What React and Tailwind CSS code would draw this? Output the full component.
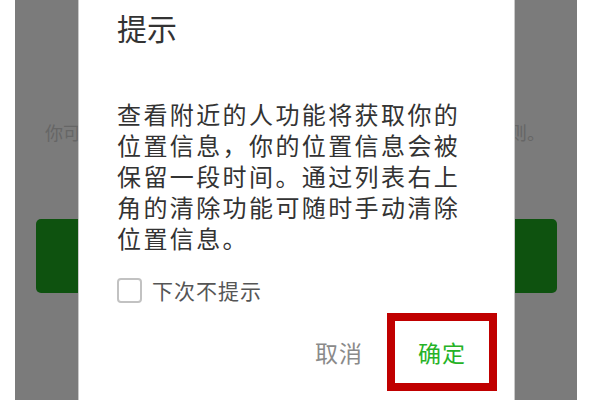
const cjk = { fontFamily: '"Noto Sans CJK SC", "Noto Sans", sans-serif' };

const App = () => {
    return (
        <div className="w-[600px] h-[400px] bg-white flex pl-[15px] pr-[23px] overflow-hidden" style={cjk}>
            {/* Dimmed page behind the dialog */}
            <div className="relative flex-1 bg-[#7b7b7b] flex flex-col">
                <div className="mt-[120px] pl-[30px] pr-[32px] flex justify-between text-[18px] leading-[24px] text-[#666666]">
                    <span>你可</span>
                    <span>则。</span>
                </div>
                <div className="mt-[75px] ml-[21px] mr-[20px] h-[74px] bg-[#0e520f] rounded-[5px]"></div>

                {/* Dialog */}
                <div className="absolute top-0 left-[63px] w-[437px] h-full bg-white border-x border-[#c9c9c9] flex flex-col pl-[38px] pr-[17px]">
                    <h2 className="pt-[12px] text-[30px] leading-[30px] text-[#333333]">提示</h2>
                    <p className="mt-[56px] text-[24px] leading-[31px] tracking-[2.4px] text-[#333333] pr-[18px]">
                        查看附近的人功能将获取你的位置信息，你的位置信息会被保留一段时间。通过列表右上角的清除功能可随时手动清除位置信息。
                    </p>
                    <label className="mt-[24px] flex items-center gap-[10px] cursor-pointer">
                        <span className="w-[25px] h-[25px] rounded-[4px] border-2 border-[#c2c2c2] bg-white"></span>
                        <span className="text-[21px] leading-[26px] tracking-[1px] text-[#555555]">下次不提示</span>
                    </label>
                    <div className="mt-[10px] flex justify-end items-center gap-[24px]">
                        <button className="text-[23px] leading-[30px] tracking-[1px] text-[#8a8a8a]">取消</button>
                        <button className="w-[110px] h-[78px] border-[8px] border-[#c00000] flex items-center justify-center text-[23px] leading-[30px] tracking-[1px] text-[#26b226]">
                            确定
                        </button>
                    </div>
                </div>
            </div>
        </div>
    );
};

export default App;
